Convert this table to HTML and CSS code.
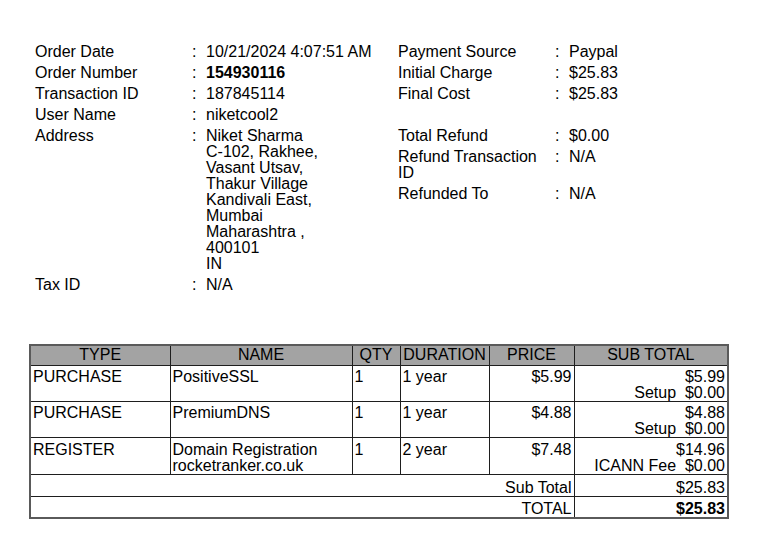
FILE: index.html
```html
<!DOCTYPE html>
<html>
<head>
<meta charset="utf-8">
<link rel="stylesheet" href="styles.css">
</head>
<body>
<div class="page">
  <div class="info">
    <div class="kv kv-left">
      <div class="k">Order Date</div><div class="c">:</div><div class="v">10/21/2024 4:07:51 AM</div>
      <div class="k">Order Number</div><div class="c">:</div><div class="v"><b>154930116</b></div>
      <div class="k">Transaction ID</div><div class="c">:</div><div class="v">187845114</div>
      <div class="k">User Name</div><div class="c">:</div><div class="v">niketcool2</div>
      <div class="k">Address</div><div class="c">:</div><div class="v">Niket Sharma<br>C-102, Rakhee,<br>Vasant Utsav,<br>Thakur Village<br>Kandivali East,<br>Mumbai<br>Maharashtra ,<br>400101<br>IN</div>
      <div class="k">Tax ID</div><div class="c">:</div><div class="v">N/A</div>
    </div>
    <div class="kv kv-right">
      <div class="k">Payment Source</div><div class="c">:</div><div class="v">Paypal</div>
      <div class="k">Initial Charge</div><div class="c">:</div><div class="v">$25.83</div>
      <div class="k">Final Cost</div><div class="c">:</div><div class="v">$25.83</div>
      <div class="k blank">&nbsp;</div><div class="c"></div><div class="v"></div>
      <div class="k">Total Refund</div><div class="c">:</div><div class="v">$0.00</div>
      <div class="k">Refund Transaction ID</div><div class="c">:</div><div class="v">N/A</div>
      <div class="k">Refunded To</div><div class="c">:</div><div class="v">N/A</div>
    </div>
  </div>

  <table class="items">
    <colgroup>
      <col class="w-type"><col class="w-name"><col class="w-qty"><col class="w-dur"><col class="w-price"><col class="w-sub">
    </colgroup>
    <thead>
      <tr><th>TYPE</th><th>NAME</th><th>QTY</th><th>DURATION</th><th>PRICE</th><th>SUB TOTAL</th></tr>
    </thead>
    <tbody>
      <tr>
        <td>PURCHASE</td><td>PositiveSSL</td><td>1</td><td>1 year</td><td class="r">$5.99</td>
        <td class="r">$5.99<br>Setup&nbsp;&nbsp;$0.00</td>
      </tr>
      <tr>
        <td>PURCHASE</td><td>PremiumDNS</td><td>1</td><td>1 year</td><td class="r">$4.88</td>
        <td class="r">$4.88<br>Setup&nbsp;&nbsp;$0.00</td>
      </tr>
      <tr class="row-last">
        <td>REGISTER</td><td>Domain Registration<br>rocketranker.co.uk</td><td>1</td><td>2 year</td><td class="r">$7.48</td>
        <td class="r">$14.96<br>ICANN Fee&nbsp;&nbsp;$0.00</td>
      </tr>
      <tr class="foot">
        <td colspan="5" class="r">Sub Total</td><td class="r">$25.83</td>
      </tr>
      <tr class="foot foot-last">
        <td colspan="5" class="r">TOTAL</td><td class="r"><b>$25.83</b></td>
      </tr>
    </tbody>
  </table>
</div>
</body>
</html>
```

FILE: styles.css
```css
html, body {
  margin: 0;
  padding: 0;
  background: #ffffff;
}

body {
  font-family: "Liberation Sans", Arial, Helvetica, sans-serif;
  font-size: 16px;
  line-height: 16px;
  color: #000000;
}

.page {
  padding: 42px 0 20px 29px;
}

.info {
  display: flex;
  align-items: flex-start;
}

.kv {
  display: grid;
  grid-template-columns: 157px 14px auto;
}

.kv-left {
  width: 363px;
  padding-left: 6px;
}

.kv-right {
  width: 300px;
}

.kv .k,
.kv .c,
.kv .v {
  padding: 2px 0 3px 0;
}

.kv .v b {
  font-weight: bold;
}

.items {
  margin-top: 48px;
  width: 698px;
  border-collapse: collapse;
  table-layout: fixed;
  border: 2px solid #5a5a5a;
}

.w-type { width: 140px; }
.w-name { width: 182px; }
.w-qty { width: 48px; }
.w-dur { width: 89px; }
.w-price { width: 85px; }
.w-sub { width: 154px; }

.items th {
  background: #a3a3a3;
  font-weight: normal;
  text-align: center;
  padding: 1px 2px 2px;
  border: 1px solid #1e1e1e;
  white-space: nowrap;
  overflow: hidden;
}

.items td {
  vertical-align: top;
  text-align: left;
  padding: 3px 2px 0;
  border: 1px solid #1e1e1e;
}

.items tr.row-last td {
  padding: 4px 2px 0;
}

.items td.r {
  text-align: right;
}

.items tr.foot td {
  padding: 5px 2px 0;
}

.items tr.foot-last td {
  padding: 4px 2px 0;
}
```
